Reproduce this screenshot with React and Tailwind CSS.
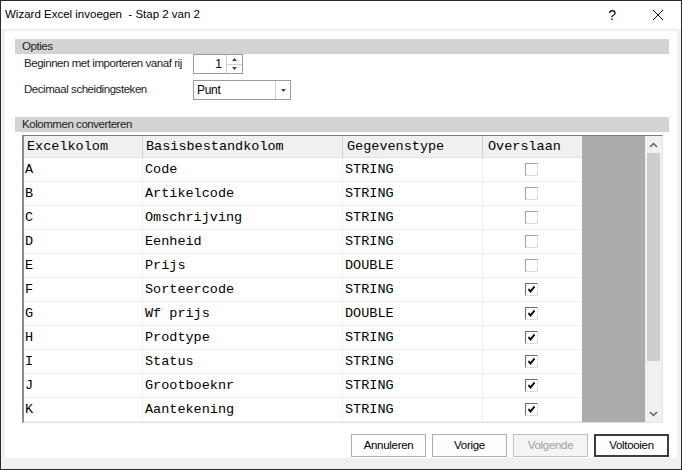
import React from 'react';

const rows = [
  ['A', 'Code', 'STRING', false],
  ['B', 'Artikelcode', 'STRING', false],
  ['C', 'Omschrijving', 'STRING', false],
  ['D', 'Eenheid', 'STRING', false],
  ['E', 'Prijs', 'DOUBLE', false],
  ['F', 'Sorteercode', 'STRING', true],
  ['G', 'Wf prijs', 'DOUBLE', true],
  ['H', 'Prodtype', 'STRING', true],
  ['I', 'Status', 'STRING', true],
  ['J', 'Grootboeknr', 'STRING', true],
  ['K', 'Aantekening', 'STRING', true],
];

function CheckBox({ checked }) {
  if (!checked) {
    return (
      <span className="block w-[13px] h-[13px] bg-white border border-t-[#a0a0a0] border-l-[#a0a0a0] border-r-[#dcdcdc] border-b-[#dcdcdc]" />
    );
  }
  return (
    <span className="block w-[13px] h-[13px] bg-white border border-t-[#6d6d6d] border-l-[#6d6d6d] border-r-[#dcdcdc] border-b-[#dcdcdc]">
      <svg width="11" height="11" viewBox="0 0 11 11" className="block">
        <path d="M2.5 5 L4.5 7.5 L8.5 2.5" fill="none" stroke="#000" strokeWidth="2" />
      </svg>
    </span>
  );
}

function Chevron({ down }) {
  return (
    <svg width="9" height="6" viewBox="0 0 9 6">
      <polyline
        points={down ? '1,1 4.5,4.5 8,1' : '1,5 4.5,1.5 8,5'}
        fill="none"
        stroke="#606060"
        strokeWidth="1.5"
      />
    </svg>
  );
}

function Tri({ down }) {
  return (
    <svg width="5" height="3" viewBox="0 0 5 3">
      <polygon points={down ? '0,0 5,0 2.5,3' : '0,3 5,3 2.5,0'} fill="#444" />
    </svg>
  );
}

export default function App() {
  const label = "text-[11.5px] tracking-[-0.45px] text-[#222]";
  const mono = "font-['Liberation_Mono','Courier_New',monospace] text-[13.5px]";

  return (
    <div className="w-[682px] h-[470px] border border-[#2b2b2b] bg-[#f0f0f0] flex flex-col font-['Liberation_Sans',Arial,sans-serif] text-black">
      {/* title bar */}
      <div className="h-[28px] shrink-0 bg-white flex items-center pl-[4px]">
        <span className="text-[11.5px] whitespace-pre">Wizard Excel invoegen  - Stap 2 van 2</span>
        <span className="ml-auto mr-[36px] text-[14px]">?</span>
        <svg width="12" height="12" viewBox="0 0 12 12" className="mr-[17px]">
          <path d="M1 1 L11 11 M11 1 L1 11" stroke="#000" strokeWidth="1" />
        </svg>
      </div>

      <div className="flex-1 px-[4px] pt-[2px] pb-[11px] flex">
        <div className="flex-1 bg-white flex flex-col">
          {/* Opties */}
          <div className={`mt-[8px] ml-[10px] mr-[8px] h-[15px] bg-[#d3d3d3] pl-[7px] leading-[15px] ${label}`}>
            Opties
          </div>
          <div className="ml-[19px] h-[20px] flex items-center">
            <span className={`w-[169px] ${label}`}>Beginnen met importeren vanaf rij</span>
            <div className="w-[50px] h-[20px] border border-[#9a9a9a] flex">
              <div className="flex-1 text-right pr-[4px] text-[12px] leading-[18px]">1</div>
              <div className="w-[16px] border-l border-[#cfcfcf] flex flex-col">
                <div className="flex-1 flex items-center justify-center border-b border-[#cfcfcf]">
                  <Tri />
                </div>
                <div className="flex-1 flex items-center justify-center">
                  <Tri down />
                </div>
              </div>
            </div>
          </div>
          <div className="ml-[19px] mt-[6px] h-[20px] flex items-center">
            <span className={`w-[169px] ${label}`}>Decimaal scheidingsteken</span>
            <div className="w-[98px] h-[20px] border border-[#9a9a9a] flex">
              <div className="flex-1 pl-[3px] text-[12px] tracking-[-0.3px] leading-[18px]">Punt</div>
              <div className="w-[15px] border-l border-[#cfcfcf] flex items-center justify-center">
                <Tri down />
              </div>
            </div>
          </div>

          {/* Kolommen converteren */}
          <div className={`mt-[17px] ml-[10px] mr-[8px] h-[15px] bg-[#d3d3d3] pl-[7px] leading-[15px] ${label}`}>
            Kolommen converteren
          </div>

          <div className="mt-[3px] ml-[17px] w-[641px] h-[288px] flex border-t border-l-2 border-r border-b border-t-[#7e7e7e] border-l-[#8a8a8a] border-r-[#e3e3e3] border-b-[#e3e3e3]">
            <div className={`w-[558px] flex flex-col ${mono}`}>
              <div className="h-[22px] flex bg-[#f0f0f0] border-b border-[#e2e2e2]">
                <div className="w-[119px] pl-[3px] leading-[21px] border-r border-[#d0d0d0]">Excelkolom</div>
                <div className="w-[200px] pl-[3px] leading-[21px] border-r border-[#d0d0d0]">Basisbestandkolom</div>
                <div className="w-[140px] pl-[4px] leading-[21px] border-r border-[#d0d0d0]">Gegevenstype</div>
                <div className="w-[99px] pl-[5px] leading-[21px]">Overslaan</div>
              </div>
              {rows.map(([col, name, type, skip]) => (
                <div key={col} className="h-[24px] flex border-b border-[#f0f0f0] bg-white">
                  <div className="w-[119px] pl-[1px] leading-[24px] border-r border-[#f0f0f0]">{col}</div>
                  <div className="w-[200px] pl-[2px] leading-[24px] border-r border-[#f0f0f0] whitespace-pre">{name}</div>
                  <div className="w-[140px] pl-[2px] leading-[24px] border-r border-[#f0f0f0]">{type}</div>
                  <div className="w-[99px] flex items-center justify-center pr-[2px]">
                    <CheckBox checked={skip} />
                  </div>
                </div>
              ))}
            </div>
            <div className="w-[63px] bg-[#ababab]" />
            <div className="w-[17px] bg-[#f0f0f0] flex flex-col">
              <div className="h-[17px] flex items-center justify-center">
                <Chevron />
              </div>
              <div className="mx-[2px] h-[208px] bg-[#cdcdcd]" />
              <div className="flex-1" />
              <div className="h-[17px] flex items-center justify-center">
                <Chevron down />
              </div>
            </div>
          </div>

          {/* buttons */}
          <div className="mt-auto mb-[1px] mr-[8px] flex justify-end gap-[6px]">
            <button className="w-[75px] h-[23px] border border-[#adadad] bg-[#fdfdfd] text-[11.5px] tracking-[-0.3px]">Annuleren</button>
            <button className="w-[75px] h-[23px] border border-[#adadad] bg-[#fdfdfd] text-[11.5px] tracking-[-0.3px]">Vorige</button>
            <button className="w-[75px] h-[23px] border border-[#bfbfbf] bg-[#f4f4f4] text-[#a0a0a0] text-[11.5px] tracking-[-0.3px]">Volgende</button>
            <button className="w-[75px] h-[23px] border-2 border-[#3c3c3c] bg-[#fdfdfd] text-[11.5px] tracking-[-0.3px]">Voltooien</button>
          </div>
        </div>
      </div>
    </div>
  );
}
